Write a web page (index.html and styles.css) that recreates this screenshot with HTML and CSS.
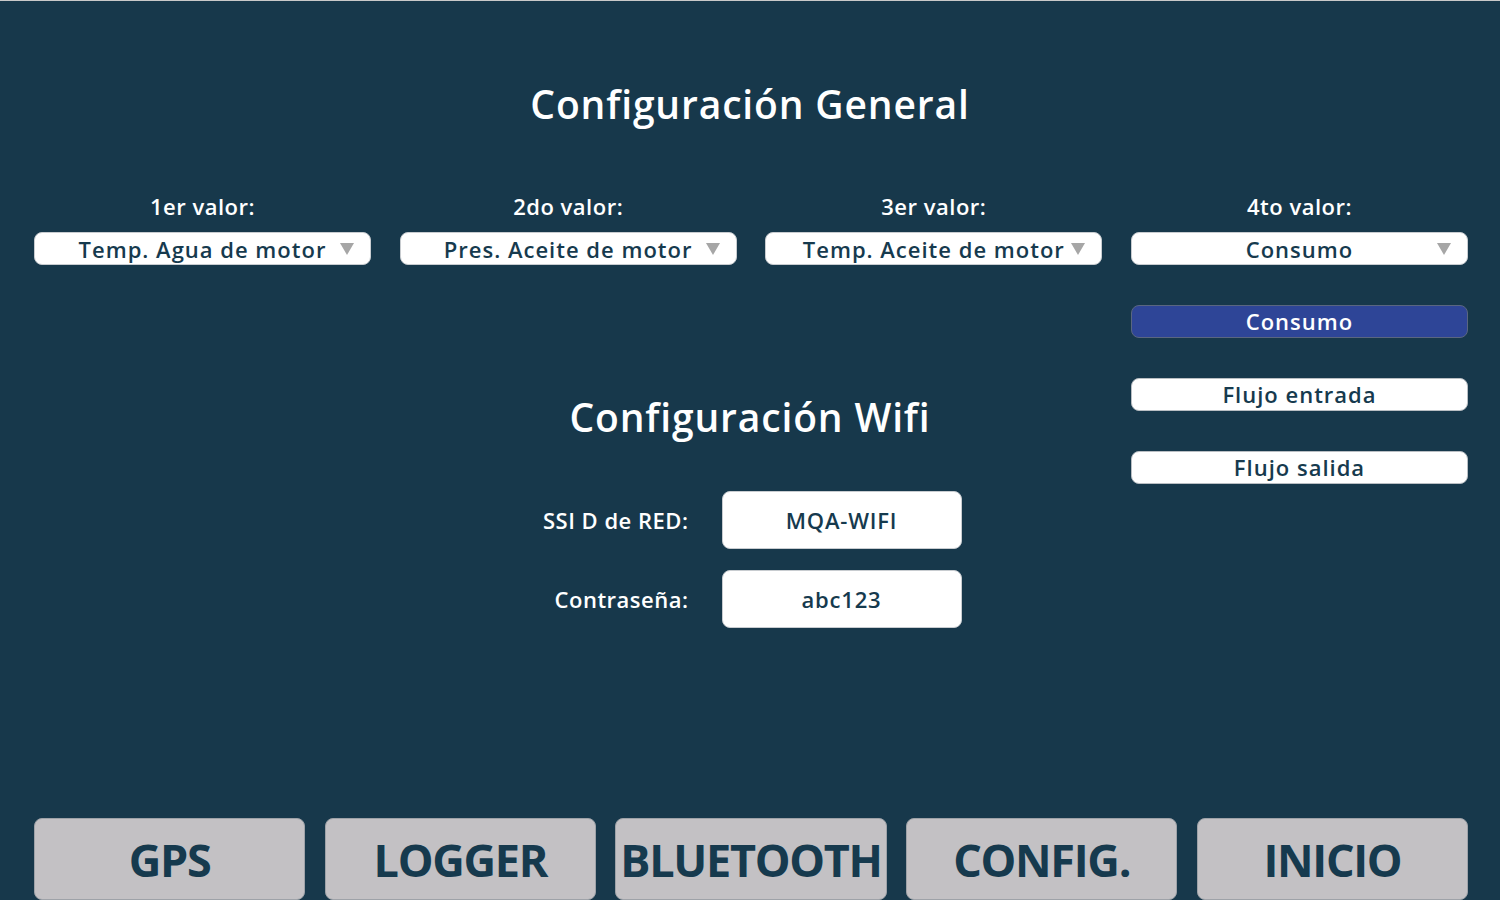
FILE: index.html
```html
<!DOCTYPE html>
<html lang="es">
<head>
<meta charset="utf-8">
<title>Configuración</title>
<link rel="stylesheet" href="styles.css">
</head>
<body>
<div class="page">
  <h1 class="title title-general">Configuración General</h1>

  <div class="selectors">
    <div class="selector">
      <div class="sel-label">1er valor:</div>
      <div class="dropdown"><span class="dd-text">Temp. Agua de motor</span><span class="dd-arrow"></span></div>
    </div>
    <div class="selector">
      <div class="sel-label">2do valor:</div>
      <div class="dropdown"><span class="dd-text">Pres. Aceite de motor</span><span class="dd-arrow"></span></div>
    </div>
    <div class="selector">
      <div class="sel-label">3er valor:</div>
      <div class="dropdown"><span class="dd-text">Temp. Aceite de motor</span><span class="dd-arrow"></span></div>
    </div>
    <div class="selector">
      <div class="sel-label">4to valor:</div>
      <div class="dropdown"><span class="dd-text">Consumo</span><span class="dd-arrow"></span></div>
      <div class="menu">
        <div class="option selected">Consumo</div>
        <div class="option">Flujo entrada</div>
        <div class="option">Flujo salida</div>
      </div>
    </div>
  </div>

  <h2 class="title title-wifi">Configuración Wifi</h2>

  <div class="wifi">
    <div class="wifi-label">SSI D de RED:</div>
    <div class="wifi-input">MQA-WIFI</div>
    <div class="wifi-label">Contraseña:</div>
    <div class="wifi-input">abc123</div>
  </div>

  <nav class="nav">
    <div class="nav-btn">GPS</div>
    <div class="nav-btn">LOGGER</div>
    <div class="nav-btn">BLUETOOTH</div>
    <div class="nav-btn">CONFIG.</div>
    <div class="nav-btn">INICIO</div>
  </nav>
</div>
</body>
</html>
```

FILE: styles.css
```css
html, body {
  margin: 0;
  padding: 0;
  height: 100%;
  overflow: hidden;
}
body {
  background: #17384b;
  font-family: "Open Sans", "Liberation Sans", sans-serif;
  color: #ffffff;
}
.page {
  height: 900px;
  box-sizing: border-box;
  border-top: 1px solid #c9c9c9;
  display: flex;
  flex-direction: column;
}
.title {
  margin: 0;
  text-align: center;
  font-weight: 600;
  font-size: 39px;
  line-height: 46px;
  letter-spacing: 0.85px;
  color: #ffffff;
}
.title-general {
  margin-top: 80px;
}
.selectors {
  margin-top: 66px;
  padding: 0 32px 0 34px;
  display: grid;
  grid-template-columns: repeat(4, 337px);
  column-gap: 28.67px;
}
.selector {
  position: relative;
  display: flex;
  flex-direction: column;
  align-items: stretch;
}
.sel-label {
  text-align: center;
  font-size: 22px;
  line-height: 26px;
  font-weight: 600;
  letter-spacing: 0.5px;
  margin-bottom: 13px;
}
.dropdown {
  position: relative;
  height: 33px;
  box-sizing: border-box;
  background: #ffffff;
  border: 1px solid #c8ccd0;
  border-radius: 8px;
  display: flex;
  align-items: center;
  justify-content: center;
}
.dd-text {
  color: #163a4e;
  font-size: 22px;
  font-weight: 600;
  line-height: 30px;
  letter-spacing: 1px;
  white-space: nowrap;
}
.dd-arrow {
  position: absolute;
  right: 16px;
  top: 10px;
  width: 0;
  height: 0;
  border-left: 7px solid transparent;
  border-right: 7px solid transparent;
  border-top: 12px solid #a6a6a6;
}
.menu {
  position: absolute;
  left: 0;
  right: 0;
  top: 112px;
  display: flex;
  flex-direction: column;
  gap: 40px;
}
.option {
  height: 33px;
  box-sizing: border-box;
  background: #ffffff;
  border: 1px solid #b9bec3;
  border-radius: 8px;
  color: #163a4e;
  font-size: 22px;
  font-weight: 600;
  line-height: 31px;
  letter-spacing: 1px;
  text-align: center;
}
.option.selected {
  background: #2e4597;
  border-color: #5a6680;
  color: #ffffff;
}
.title-wifi {
  margin-top: 129px;
}
.wifi {
  margin-top: 51px;
  display: grid;
  grid-template-columns: 150px 240px;
  column-gap: 33px;
  row-gap: 21px;
  justify-content: center;
  align-items: center;
}
.wifi-label {
  text-align: right;
  font-size: 22px;
  font-weight: 600;
  line-height: 30px;
  letter-spacing: 0.5px;
  white-space: nowrap;
}
.wifi-input {
  height: 58px;
  box-sizing: border-box;
  background: #ffffff;
  border: 1px solid #c8ccd0;
  border-radius: 8px;
  color: #163a4e;
  font-size: 22px;
  font-weight: 600;
  letter-spacing: 0.8px;
  display: flex;
  align-items: center;
  justify-content: center;
}
.nav {
  margin-top: auto;
  padding: 0 32px 0 34px;
  display: grid;
  grid-template-columns: repeat(5, 1fr);
  column-gap: 19.5px;
}
.nav-btn {
  height: 82px;
  box-sizing: border-box;
  background: #c3c1c4;
  border: 1px solid #9ea2a8;
  border-radius: 8px;
  color: #163a4e;
  font-size: 45px;
  font-weight: 700;
  letter-spacing: -1.3px;
  display: flex;
  align-items: center;
  justify-content: center;
  white-space: nowrap;
  overflow: hidden;
}
```
